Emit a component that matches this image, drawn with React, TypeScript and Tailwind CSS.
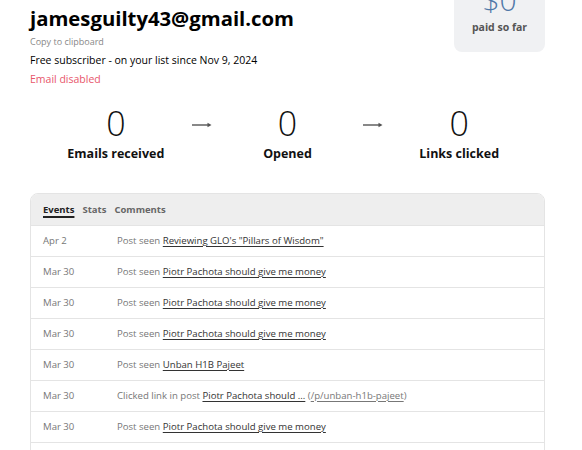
const font = { fontFamily: '"Open Sans", "Noto Sans", sans-serif' };

type Row = {
  date: string;
  action: string;
  link: string;
  extra?: string;
};

const rows: Row[] = [
  { date: "Apr 2", action: "Post seen", link: 'Reviewing GLO\'s "Pillars of Wisdom"' },
  { date: "Mar 30", action: "Post seen", link: "Piotr Pachota should give me money" },
  { date: "Mar 30", action: "Post seen", link: "Piotr Pachota should give me money" },
  { date: "Mar 30", action: "Post seen", link: "Piotr Pachota should give me money" },
  { date: "Mar 30", action: "Post seen", link: "Unban H1B Pajeet" },
  {
    date: "Mar 30",
    action: "Clicked link in post",
    link: "Piotr Pachota should ...",
    extra: "/p/unban-h1b-pajeet",
  },
  { date: "Mar 30", action: "Post seen", link: "Piotr Pachota should give me money" },
  { date: "Mar 30", action: "Post seen", link: "Piotr Pachota should give me money" },
];

function Arrow() {
  return (
    <div className="w-0 flex justify-center">
      <svg width="20" height="6" viewBox="0 0 20 6" className="shrink-0 mt-[19px]">
        <line x1="0" y1="3" x2="18" y2="3" stroke="#555" strokeWidth="1.4" />
        <path d="M15.5 0.8 L19.5 3 L15.5 5.2 Z" fill="#555" />
      </svg>
    </div>
  );
}

function Stat({ label }: { label: string }) {
  return (
    <div className="flex-1 flex flex-col items-center">
      <div className="text-[34px] font-light leading-[40px] text-[#111]">0</div>
      <div className="text-[12.5px] font-bold leading-[18px] mt-[2px] text-[#111]">{label}</div>
    </div>
  );
}

export default function App() {
  return (
    <div className="w-[582px] h-[450px] overflow-hidden bg-white" style={font}>
      <div className="pl-[30px] pr-[37px]">
        <div className="flex justify-between">
          <div className="pt-[4px]">
            <h1 className="text-[20.3px] font-bold leading-[28px] text-black">
              jamesguilty43@gmail.com
            </h1>
            <div className="text-[9px] leading-[12px] mt-[4px] text-[#888]">Copy to clipboard</div>
            <div className="text-[10.5px] leading-[16px] mt-[4px] text-black">
              Free subscriber - on your list since Nov 9, 2024
            </div>
            <div className="text-[10.5px] leading-[16px] mt-[3px] text-[#e8566b]">Email disabled</div>
          </div>
          <div className="-mt-[30px] w-[91px] h-[82px] rounded-[8px] bg-[#f0f1f3] flex flex-col items-center pt-[13px]">
            <div className="text-[30px] font-light leading-[34px] text-[#4f78a8]">$0</div>
            <div className="text-[10.5px] font-bold leading-[14px] mt-[3px] text-[#555]">paid so far</div>
          </div>
        </div>

        <div className="flex mt-[16px]">
          <Stat label="Emails received" />
          <Arrow />
          <Stat label="Opened" />
          <Arrow />
          <Stat label="Links clicked" />
        </div>

        <div className="mt-[30px] border border-[#e4e4e4] rounded-t-[8px] overflow-hidden">
          <div className="bg-[#eeeeee] h-[32px] flex items-center gap-[8px] px-[12px] pt-[2px] border-b border-[#e4e4e4]">
            <span className="text-[9.5px] font-bold text-[#222] underline underline-offset-[3px] decoration-[1.5px]">
              Events
            </span>
            <span className="text-[9.5px] font-bold text-[#666]">Stats</span>
            <span className="text-[9.5px] font-bold text-[#666]">Comments</span>
          </div>
          {rows.map((r, i) => (
            <div
              key={i}
              className="h-[31px] flex items-center border-b border-[#e4e4e4] text-[9.6px] text-[#777]"
            >
              <div className="w-[86px] pl-[12px]">{r.date}</div>
              <div>
                {r.action}{" "}
                <span className="text-[#333] underline underline-offset-[2px]">{r.link}</span>
                {r.extra && (
                  <>
                    {" "}(<span className="underline underline-offset-[2px]">{r.extra}</span>)
                  </>
                )}
              </div>
            </div>
          ))}
        </div>
      </div>
    </div>
  );
}
